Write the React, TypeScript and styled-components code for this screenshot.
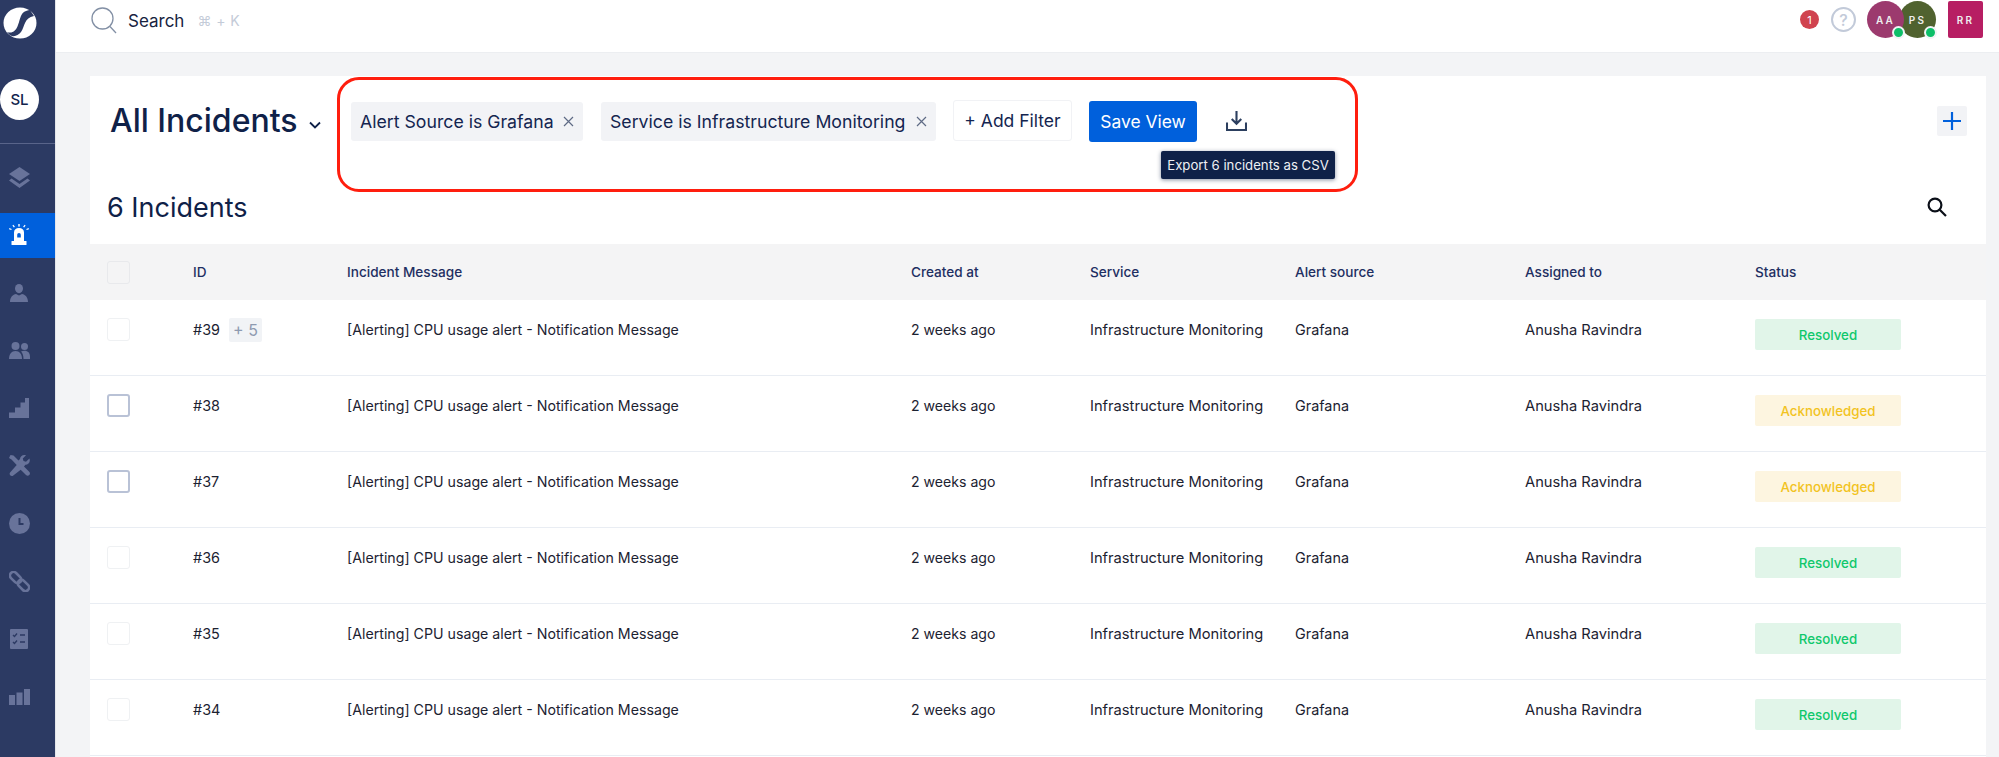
import React from "react";
import styled, { createGlobalStyle } from "styled-components";

const Global = createGlobalStyle`
  html, body { margin: 0; padding: 0; width: 100%; height: 100%; overflow: hidden; background: #f3f4f6; }
  body { font-family: Inter, "Liberation Sans", sans-serif; color: #0f2148; }
  * { box-sizing: border-box; }
`;

const Page = styled.div`
  display: flex;
  width: 1999px;
  height: 757px;
  overflow: hidden;
`;

const Sidebar = styled.aside`
  flex: 0 0 56px;
  background: #2c3a63;
  display: flex;
  flex-direction: column;
  border-right: 1px solid #e3e5ea;
`;

const LogoWrap = styled.div`
  height: 79px;
  padding: 7px 0 0 3px;
  svg { display: block; }
`;

const OrgCircle = styled.div`
  width: 39px;
  height: 41px;
  border-radius: 50%;
  background: #fff;
  color: #12244d;
  font-size: 15px;
  font-weight: 500;
  display: flex;
  align-items: center;
  justify-content: center;
`;

const SideDivider = styled.div`
  height: 1px;
  margin-top: 23px;
  background: #59648a;
`;

const NavList = styled.nav`
  display: flex;
  flex-direction: column;
  gap: 12.7px;
  padding-top: 11px;
`;

const NavItem = styled.div<{ $active?: boolean }>`
  height: 45px;
  width: 55px;
  padding-right: 17px;
  display: flex;
  align-items: center;
  justify-content: center;
  color: ${(p) => (p.$active ? "#fff" : "#68739a")};
  background: ${(p) => (p.$active ? "#0060dc" : "transparent")};
`;

const Main = styled.main`
  flex: 1;
  min-width: 0;
  display: flex;
  flex-direction: column;
`;

const TopBar = styled.header`
  height: 53px;
  flex: none;
  background: #fff;
  border-bottom: 1px solid #eceef1;
  display: flex;
  align-items: flex-start;
  padding: 7px 16px 0 35px;
`;

const SearchGroup = styled.div`
  display: flex;
  align-items: center;
  height: 27px;
`;

const SearchLabel = styled.span`
  margin-left: 11px;
  font-size: 17px;
  color: #17233f;
`;

const Shortcut = styled.span`
  margin-left: 13px;
  font-size: 14px;
  color: #c4cbd8;
  letter-spacing: 0.4px;
`;

const TopRight = styled.div`
  margin-left: auto;
  margin-top: -6px;
  display: flex;
  align-items: center;
`;

const CountBadge = styled.span`
  width: 19px;
  height: 19px;
  border-radius: 50%;
  background: #d0434f;
  color: #fff;
  font-size: 11px;
  display: flex;
  align-items: center;
  justify-content: center;
  margin-right: 12px;
`;

const HelpIcon = styled.span`
  width: 25px;
  height: 25px;
  border-radius: 50%;
  border: 2px solid #c2cad9;
  color: #c2cad9;
  font-size: 16px;
  font-weight: 500;
  display: flex;
  align-items: center;
  justify-content: center;
  margin-right: 11px;
`;

const Avatar = styled.div<{ $bg: string; $over?: boolean }>`
  position: relative;
  width: 37px;
  height: 37px;
  border-radius: 50%;
  background: ${(p) => p.$bg};
  color: #eee;
  font-size: 10px;
  font-weight: 600;
  letter-spacing: 2.2px;
  display: flex;
  align-items: center;
  justify-content: center;
  margin-left: ${(p) => (p.$over ? "-5px" : "0")};
  z-index: ${(p) => (p.$over ? 0 : 1)};
`;

const OnlineDot = styled.span`
  position: absolute;
  right: -1px;
  bottom: -1px;
  width: 13px;
  height: 13px;
  border-radius: 50%;
  background: #0dbf69;
  border: 2px solid #f1f3f5;
`;

const SquareAvatar = styled.div`
  width: 35px;
  height: 37px;
  margin-left: 12px;
  border-radius: 2px;
  background: #b71e63;
  color: #eee;
  font-size: 10px;
  font-weight: 600;
  letter-spacing: 2.2px;
  display: flex;
  align-items: center;
  justify-content: center;
`;

const Content = styled.div`
  flex: 1;
  min-height: 0;
  padding: 23px 13px 0 34px;
`;

const Card = styled.section`
  background: #fff;
  height: 100%;
`;

const CardHead = styled.div`
  display: flex;
  align-items: flex-start;
  padding: 1px 19px 0 20px;
  height: 116px;
`;

const TitleGroup = styled.div`
  display: flex;
  align-items: center;
  height: 87px;
  width: 227px;
  flex: none;
`;

const Title = styled.h1`
  margin: 0;
  font-size: 32px;
  font-weight: 500;
  color: #0f2148;
  white-space: nowrap;
`;

const Chevron = styled.span`
  margin: 8px 0 0 11px;
  display: flex;
`;

const Highlight = styled.div`
  position: relative;
  width: 1021px;
  height: 115px;
  border: 3px solid #ff1e0e;
  border-radius: 22px;
  display: flex;
  align-items: flex-start;
  padding: 20px 0 0 11px;
`;

const Chip = styled.div<{ $w: number; $ml: number }>`
  width: ${(p) => p.$w}px;
  margin-left: ${(p) => p.$ml}px;
  height: 39px;
  margin-top: 2px;
  border-radius: 3px;
  background: #f2f3f6;
  font-size: 17.7px;
  color: #142550;
  display: flex;
  align-items: center;
  justify-content: space-between;
  padding: 0 9px 0 9px;
  white-space: nowrap;
`;

const ChipX = styled.span`
  display: flex;
  color: #5e6a85;
`;

const AddFilter = styled.div`
  margin-left: 17px;
  width: 119px;
  height: 41px;
  border: 1px solid #f1f2f5;
  border-radius: 3px;
  font-size: 17.5px;
  color: #142550;
  display: flex;
  align-items: center;
  justify-content: center;
  white-space: nowrap;
`;

const SaveButton = styled.button`
  margin: 1px 0 0 17px;
  width: 108px;
  height: 41px;
  border: none;
  border-radius: 3px;
  background: #0060dc;
  color: #fff;
  font-family: inherit;
  font-size: 17.4px;
  white-space: nowrap;
  padding: 0;
`;

const DownloadWrap = styled.span`
  margin: 11px 0 0 29px;
  display: flex;
  color: #2c3f5f;
`;

const Tooltip = styled.div`
  position: absolute;
  left: 821px;
  top: 71px;
  width: 174px;
  height: 28px;
  border-radius: 2px;
  background: #0f2148;
  box-shadow: 0 1px 4px rgba(15, 33, 72, 0.5);
  color: #eef0f5;
  font-size: 13.2px;
  display: flex;
  align-items: center;
  justify-content: center;
  white-space: nowrap;
`;

const PlusButton = styled.div`
  margin: 29px 0 0 auto;
  width: 30px;
  height: 30px;
  border-radius: 2px;
  background: #f2f3f6;
  display: flex;
  align-items: center;
  justify-content: center;
  color: #0060dc;
`;

const CountRow = styled.div`
  height: 52px;
  display: flex;
  align-items: center;
  justify-content: space-between;
  padding: 0 39px 22px 17px;
`;

const CountText = styled.h2`
  margin: 0;
  font-size: 27px;
  font-weight: 400;
  color: #0f2148;
`;

const GRID = "103px 154px 564px 179px 205px 230px 230px 1fr";

const HeadRow = styled.div`
  display: grid;
  grid-template-columns: ${GRID};
  height: 56px;
  align-items: center;
  background: #f4f4f5;
  font-size: 13.6px;
  font-weight: 500;
  color: #1e2f62;
`;

const Row = styled.div`
  display: grid;
  grid-template-columns: ${GRID};
  height: 76px;
  align-items: start;
  padding-top: 18px;
  border-bottom: 1px solid #e9edf3;
  font-size: 14.4px;
  color: #1c2231;
`;

const CheckCell = styled.div`
  padding-left: 17px;
`;

const CheckBox = styled.span<{ $strong?: boolean; $head?: boolean }>`
  display: block;
  width: 23px;
  height: 23px;
  border-radius: 3px;
  border: ${(p) => (p.$strong ? "2px solid #b9c2d6" : p.$head ? "1px solid #e8e9ec" : "1px solid #eff1f3")};
  background: ${(p) => (p.$head ? "#f4f4f5" : "#fff")};
`;

const TextCell = styled.div<{ $size?: number }>`
  padding-top: 2px;
  white-space: nowrap;
  line-height: 20px;
  font-size: ${(p) => p.$size ?? 14.4}px;
`;

const IdCell = styled(TextCell)`
  display: flex;
  align-items: flex-start;
  padding-top: 2px;
`;

const Extra = styled.span`
  margin: -2px 0 0 9px;
  width: 33px;
  height: 24px;
  border-radius: 2px;
  background: #f1f3f6;
  color: #8e9ab0;
  font-size: 16px;
  display: flex;
  align-items: center;
  justify-content: center;
`;

const Status = styled.div<{ $kind: "resolved" | "ack" }>`
  width: 146px;
  height: 31px;
  margin-top: 1px;
  border-radius: 2px;
  font-size: 13.3px;
  font-weight: 500;
  display: flex;
  align-items: center;
  justify-content: center;
  background: ${(p) => (p.$kind === "resolved" ? "#e1f5e9" : "#fdf5e0")};
  color: ${(p) => (p.$kind === "resolved" ? "#10c86c" : "#f2c31f")};
`;

const incidents = [
  { id: 39, status: "resolved", extra: true },
  { id: 38, status: "ack", strong: true },
  { id: 37, status: "ack", strong: true },
  { id: 36, status: "resolved" },
  { id: 35, status: "resolved" },
  { id: 34, status: "resolved" },
] as const;

const Logo = () => (
  <svg width="34" height="32" viewBox="0 0 34 32">
    <ellipse cx="17" cy="16" rx="16.5" ry="15.5" fill="#fff" />
    <path d="M27 3 C17 4 18 11 15 18 C13 24 9 27 4 25 C8 31 14 30 18 25 C22 19 21 11 31 9 Z" fill="#2c3a63" />
  </svg>
);

const Layers = () => (
  <svg width="21" height="21" viewBox="0 0 21 21" fill="currentColor">
    <path d="M10.5 0 L21 7 L10.5 14 L0 7 Z" />
    <path d="M2.5 11.5 L10.5 17 L18.5 11.5 L21 13.5 L10.5 21 L0 13.5 Z" />
  </svg>
);

const Siren = () => (
  <svg width="20" height="22" viewBox="0 0 20 22" fill="currentColor">
    <path d="M5 8.5 C5 5.5 7 4 10 4 S15 5.5 15 8.5 V17 H5 Z M10 9 a1.8 1.8 0 0 0 -1.8 1.8 V13.5 h3.6 V10.8 A1.8 1.8 0 0 0 10 9 Z" fillRule="evenodd" />
    <rect x="2.5" y="17" width="15" height="4" rx="0.5" />
    <rect x="9.3" y="0" width="1.4" height="2.6" />
    <path d="M3.4 1.6 l1 -.8 1.5 2 -1 .8 Z M16.6 1.6 l-1 -.8 -1.5 2 1 .8 Z M0 5.3 l.4 -1.2 2.3 .8 -.4 1.2 Z M20 5.3 l-.4 -1.2 -2.3 .8 .4 1.2 Z" />
  </svg>
);

const Person = () => (
  <svg width="18" height="18" viewBox="0 0 18 18" fill="currentColor">
    <ellipse cx="9" cy="4.6" rx="4" ry="4.6" />
    <path d="M0 18 C0 13 3 10.5 6 10 L9 11.5 L12 10 C15 10.5 18 13 18 18 Z" />
  </svg>
);

const People = () => (
  <svg width="21" height="17" viewBox="0 0 21 17" fill="currentColor">
    <circle cx="6.5" cy="4" r="4" />
    <circle cx="15.5" cy="4.5" r="3.5" />
    <path d="M0 17 C0 12 2.5 9 6.5 9 S13 12 13 17 Z" />
    <path d="M14.5 17 C14.5 13.5 13.5 11 12 9.5 C13 9 14.2 8.8 15.5 8.8 C19 8.8 21 11 21 15 V17 Z" />
  </svg>
);

const Stairs = () => (
  <svg width="20" height="20" viewBox="0 0 20 20" fill="currentColor">
    <path d="M20 0 V20 H0 V14.5 H6 V9.5 H11.5 V4.5 H16 V0 Z" />
  </svg>
);

const Tools = () => (
  <svg width="21" height="21" viewBox="0 0 21 21" fill="currentColor">
    <path d="M4.5 0.5 L9.5 5.5 L11 4 C11 1.8 13 0 15.3 0 C16 0 16.5 .1 17 .3 L13.8 3.5 L14.5 6 L17 6.8 L20.4 3.5 C20.7 4.2 20.8 4.8 20.8 5.5 C20.8 8 18.8 9.8 16.4 9.8 L15 11.5 L20.2 16.7 C21.2 17.7 21.2 19 20.3 20 C19.4 20.9 18 20.9 17 20 L11.7 14.8 L4.3 20.4 C3.4 21.2 2 21.1 1.2 20.2 C.4 19.3 .4 18 1.3 17.2 L7.7 10 L2.5 4.5 L0 3 L1.5 0 Z" />
  </svg>
);

const ClockIcon = () => (
  <svg width="21" height="21" viewBox="0 0 21 21">
    <circle cx="10.5" cy="10.5" r="10.5" fill="currentColor" />
    <path d="M10.5 5 V11 H14.5" stroke="#2c3a63" strokeWidth="2" fill="none" />
  </svg>
);

const LinkIcon = () => (
  <svg width="21" height="21" viewBox="0 0 21 21" fill="none" stroke="currentColor" strokeWidth="2.6">
    <rect x="-6.5" y="-3.6" width="13" height="7.2" rx="3.6" transform="translate(6.6 6.6) rotate(45)" />
    <rect x="-6.5" y="-3.6" width="13" height="7.2" rx="3.6" transform="translate(14.4 14.4) rotate(45)" />
  </svg>
);

const ChecklistIcon = () => (
  <svg width="18" height="20" viewBox="0 0 18 20">
    <rect width="18" height="20" rx="1" fill="currentColor" />
    <path d="M3 6 l1.5 1.5 L7 4.5 M3 13 l1.5 1.5 L7 11.5 M10 6 H15 M10 13 H15" stroke="#2c3a63" strokeWidth="1.4" fill="none" />
  </svg>
);

const BarsIcon = () => (
  <svg width="21" height="16" viewBox="0 0 21 16" fill="currentColor">
    <rect x="0" y="6" width="6" height="10" />
    <rect x="7.5" y="3.5" width="6" height="12.5" />
    <rect x="15" y="0" width="6" height="16" />
  </svg>
);

const SearchOutline = () => (
  <svg width="26" height="27" viewBox="0 0 26 27" fill="none" stroke="#8390a5" strokeWidth="1.3">
    <circle cx="11.5" cy="11.5" r="10.5" />
    <path d="M19 19.5 L25 26" />
  </svg>
);

const SmallX = () => (
  <svg width="11" height="11" viewBox="0 0 11 11" stroke="currentColor" strokeWidth="1.2">
    <path d="M1 1 L10 10 M10 1 L1 10" />
  </svg>
);

const App = () => (
  <>
    <Global />
    <Page>
      <Sidebar>
        <LogoWrap><Logo /></LogoWrap>
        <OrgCircle>SL</OrgCircle>
        <SideDivider />
        <NavList>
          <NavItem><Layers /></NavItem>
          <NavItem $active><Siren /></NavItem>
          <NavItem><Person /></NavItem>
          <NavItem><People /></NavItem>
          <NavItem><Stairs /></NavItem>
          <NavItem><Tools /></NavItem>
          <NavItem><ClockIcon /></NavItem>
          <NavItem><LinkIcon /></NavItem>
          <NavItem><ChecklistIcon /></NavItem>
          <NavItem><BarsIcon /></NavItem>
        </NavList>
      </Sidebar>
      <Main>
        <TopBar>
          <SearchGroup>
            <SearchOutline />
            <SearchLabel>Search</SearchLabel>
            <Shortcut>⌘ + K</Shortcut>
          </SearchGroup>
          <TopRight>
            <CountBadge>1</CountBadge>
            <HelpIcon>?</HelpIcon>
            <Avatar $bg="#9c3a6e">AA<OnlineDot /></Avatar>
            <Avatar $bg="#50622f" $over>PS<OnlineDot /></Avatar>
            <SquareAvatar>RR</SquareAvatar>
          </TopRight>
        </TopBar>
        <Content>
          <Card>
            <CardHead>
              <TitleGroup>
                <Title>All Incidents</Title>
                <Chevron>
                  <svg width="12" height="8" viewBox="0 0 12 8" fill="none" stroke="#0f2148" strokeWidth="1.8"><path d="M1 1.5 L6 6.5 L11 1.5" /></svg>
                </Chevron>
              </TitleGroup>
              <Highlight>
                <Chip $w={232} $ml={0}>Alert Source is Grafana<ChipX><SmallX /></ChipX></Chip>
                <Chip $w={335} $ml={18}>Service is Infrastructure Monitoring<ChipX><SmallX /></ChipX></Chip>
                <AddFilter>+ Add Filter</AddFilter>
                <SaveButton>Save View</SaveButton>
                <DownloadWrap>
                  <svg width="21" height="20" viewBox="0 0 22 21" fill="none" stroke="currentColor" strokeWidth="2.2"><path d="M11 0 V13 M6 8.5 L11 13.5 L16 8.5 M1 12 V20 H21 V12" /></svg>
                </DownloadWrap>
                <Tooltip>Export 6 incidents as CSV</Tooltip>
              </Highlight>
              <PlusButton>
                <svg width="20" height="20" viewBox="0 0 20 20" stroke="currentColor" strokeWidth="2.2"><path d="M10 1 V19 M1 10 H19" /></svg>
              </PlusButton>
            </CardHead>
            <CountRow>
              <CountText>6 Incidents</CountText>
              <svg width="20" height="20" viewBox="0 0 20 20" fill="none" stroke="#0b0f18" strokeWidth="2.2"><circle cx="8" cy="8" r="6.4" /><path d="M12.7 12.7 L19 19" /></svg>
            </CountRow>
            <HeadRow>
              <CheckCell><CheckBox $head /></CheckCell>
              <div>ID</div>
              <div>Incident Message</div>
              <div>Created at</div>
              <div>Service</div>
              <div>Alert source</div>
              <div>Assigned to</div>
              <div>Status</div>
            </HeadRow>
            {incidents.map((r) => (
              <Row key={r.id}>
                <CheckCell><CheckBox $strong={"strong" in r} /></CheckCell>
                <IdCell>#{r.id}{"extra" in r && <Extra>+ 5</Extra>}</IdCell>
                <TextCell $size={14.2}>[Alerting] CPU usage alert - Notification Message</TextCell>
                <TextCell $size={14.1}>2 weeks ago</TextCell>
                <TextCell $size={14.7}>Infrastructure Monitoring</TextCell>
                <TextCell>Grafana</TextCell>
                <TextCell $size={14.7}>Anusha Ravindra</TextCell>
                <Status $kind={r.status}>{r.status === "resolved" ? "Resolved" : "Acknowledged"}</Status>
              </Row>
            ))}
          </Card>
        </Content>
      </Main>
    </Page>
  </>
);

export default App;
